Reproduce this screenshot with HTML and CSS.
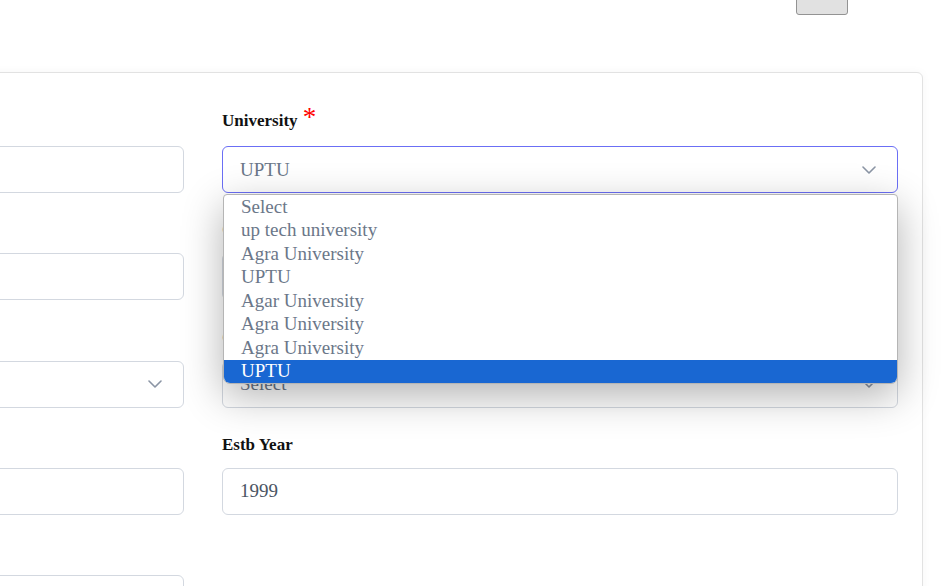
FILE: index.html
```html
<!DOCTYPE html>
<html lang="en">
<head>
<meta charset="utf-8">
<title>College Form</title>
<link rel="stylesheet" href="styles.css">
</head>
<body>
<div class="topbar">
  <button class="top-btn" type="button">Back</button>
</div>
<div class="card">
  <div class="grid">
    <div class="field">
      <label class="label label-req">College Name <span class="req">*</span></label>
      <div class="control"></div>
    </div>
    <div class="field">
      <label class="label label-req">University <span class="req">*</span></label>
      <div class="control-wrap">
        <div class="control select focus">
          <span class="value">UPTU</span>
          <svg class="chev" width="14" height="8" viewBox="0 0 14 8"><path d="M1 1l6 6 6-6" fill="none" stroke="#8b95a5" stroke-width="1.6" stroke-linecap="round" stroke-linejoin="round"/></svg>
        </div>
        <div class="dropdown">
          <div class="opt">Select</div>
          <div class="opt">up tech university</div>
          <div class="opt">Agra University</div>
          <div class="opt">UPTU</div>
          <div class="opt">Agar University</div>
          <div class="opt">Agra University</div>
          <div class="opt">Agra University</div>
          <div class="opt active">UPTU</div>
        </div>
      </div>
    </div>
    <div class="field">
      <label class="label">Email</label>
      <div class="control"></div>
    </div>
    <div class="field">
      <label class="label hidden-label">Course</label>
      <div class="control"></div>
    </div>
    <div class="field">
      <label class="label">State</label>
      <div class="control select">
        <span class="value"></span>
        <svg class="chev" width="14" height="8" viewBox="0 0 14 8"><path d="M1 1l6 6 6-6" fill="none" stroke="#8b95a5" stroke-width="1.6" stroke-linecap="round" stroke-linejoin="round"/></svg>
      </div>
    </div>
    <div class="field">
      <label class="label hidden-label">City</label>
      <div class="control select">
        <span class="value">Select</span>
        <svg class="chev" width="14" height="8" viewBox="0 0 14 8"><path d="M1 1l6 6 6-6" fill="none" stroke="#8b95a5" stroke-width="1.6" stroke-linecap="round" stroke-linejoin="round"/></svg>
      </div>
    </div>
    <div class="field">
      <label class="label">Phone</label>
      <div class="control"></div>
    </div>
    <div class="field">
      <label class="label">Estb Year</label>
      <div class="control"><span class="value dark">1999</span></div>
    </div>
    <div class="field">
      <label class="label">Address</label>
      <div class="control"></div>
    </div>
  </div>
</div>
</body>
</html>
```

FILE: styles.css
```css
html, body {
  margin: 0;
  padding: 0;
}
body {
  background: #ffffff;
  font-family: "Liberation Serif", "Times New Roman", serif;
  overflow: hidden;
  width: 950px;
  height: 586px;
}
.topbar {
  height: 15px;
  display: flex;
  justify-content: flex-end;
  align-items: flex-end;
  padding-right: 102px;
  overflow: hidden;
}
.top-btn {
  width: 52px;
  height: 30px;
  flex: none;
  background: #e1e1e1;
  border: 1px solid #939393;
  border-radius: 3px;
  color: transparent;
  font-size: 1px;
}
.card {
  box-sizing: border-box;
  width: 1440px;
  margin: 57px 0 0 -517px;
  padding: 39px 24px 40px 24px;
  background: #fff;
  border: 1px solid #e2e2e2;
  border-radius: 6px;
  box-shadow: 0 0 10px rgba(0, 0, 0, 0.04);
  height: 600px;
}
.grid {
  display: grid;
  grid-template-columns: 676px 676px;
  column-gap: 38px;
  row-gap: 28.3px;
}
.field {
  display: flex;
  flex-direction: column;
}
.label {
  display: block;
  font-weight: bold;
  font-size: 17px;
  line-height: 18px;
  color: #111;
  margin-bottom: 14px;
  white-space: nowrap;
}
.hidden-label {
  color: #999;
}
.label-req {
  margin-bottom: 16px;
}
.req {
  color: #ff0000;
  font-size: 27px;
  line-height: 0;
  font-weight: normal;
  position: relative;
  top: 0;
  margin-left: 1px;
}
.control-wrap {
  position: relative;
}
.control {
  box-sizing: border-box;
  height: 47px;
  border: 1px solid #d3d8e0;
  border-radius: 6px;
  background: #fff;
  display: flex;
  align-items: center;
  padding: 0 21px 0 17px;
  font-size: 19px;
  color: #6b7789;
}
.control.focus {
  border-color: #6b6ff5;
}
.select {
  justify-content: space-between;
}
.value.dark {
  color: #4b5563;
}
.chev {
  display: block;
  flex: none;
}
.dropdown {
  position: absolute;
  top: calc(100% + 1px);
  left: 1px;
  right: 0;
  box-sizing: border-box;
  height: 190px;
  background: #fff;
  border: 1px solid #b5b5b5;
  border-radius: 4px 4px 7px 7px;
  box-shadow: 0 12px 40px rgba(0, 0, 0, 0.3);
  display: flex;
  flex-direction: column;
  overflow: hidden;
  z-index: 5;
}
.opt {
  flex: 1;
  display: flex;
  align-items: center;
  padding-left: 17px;
  font-size: 19px;
  color: #6b7789;
}
.opt.active {
  background: #1967d2;
  color: #fff;
}
```
